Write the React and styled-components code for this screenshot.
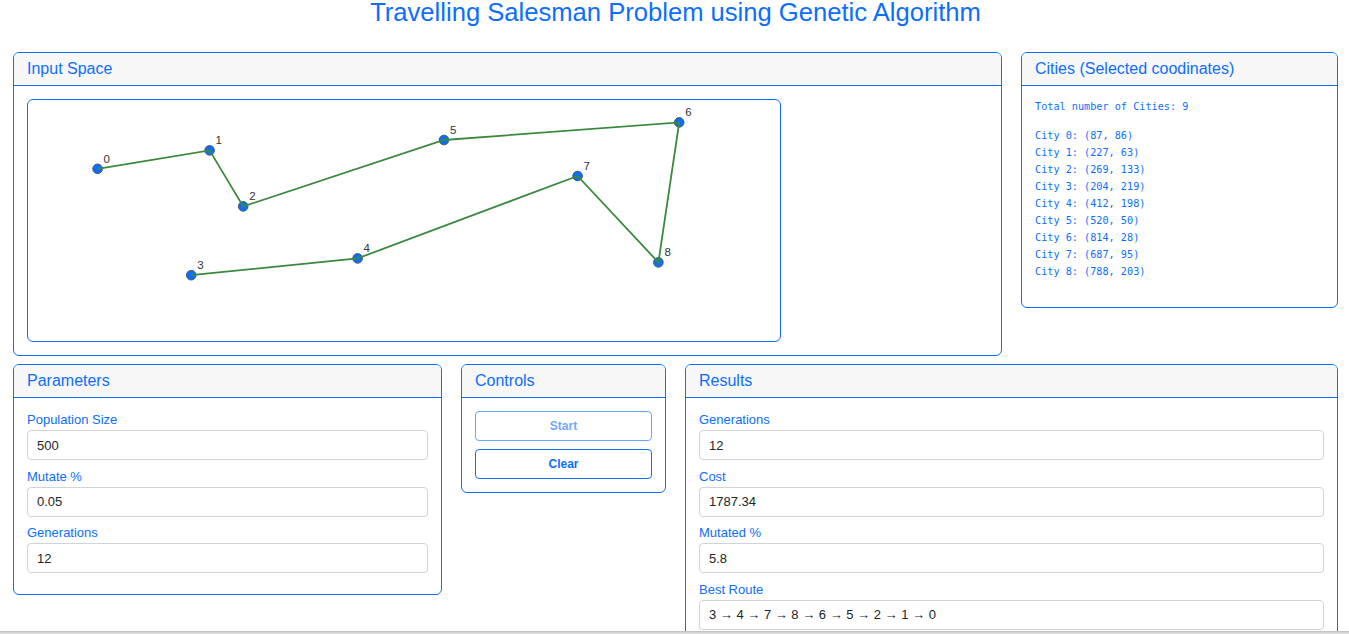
import styled, { createGlobalStyle } from 'styled-components';

const GlobalStyle = createGlobalStyle`
  * { box-sizing: border-box; }
  body {
    margin: 0;
    background: #fff;
    font-family: "Liberation Sans", Arial, sans-serif;
    color: #212529;
  }
`;

const cities = [
  [87, 86], [227, 63], [269, 133], [204, 219], [412, 198],
  [520, 50], [814, 28], [687, 95], [788, 203],
];
const route = [3, 4, 7, 8, 6, 5, 2, 1, 0];
const SCALE = 0.8;

const Page = styled.div`
  padding: 0 11px 0 13px;
`;

const Title = styled.h1`
  margin: 0 0 27px;
  text-align: center;
  font-size: 25.6px;
  line-height: 25px;
  font-weight: 400;
  color: #0d6efd;
`;

const Row = styled.div`
  display: grid;
  grid-template-columns: ${(p) => p.$cols};
  gap: 19px;
  align-items: start;
  margin-bottom: ${(p) => p.$mb || 0}px;
`;

const Card = styled.div`
  min-width: 0;
  border: 1px solid #0d6efd;
  border-radius: 6px;
  overflow: hidden;
  background: #fff;
`;

const CardHeader = styled.div`
  background: #f7f7f7;
  border-bottom: 1px solid #0d6efd;
  padding: 4px 13px;
  font-size: 16px;
  line-height: 24px;
  color: #0d6efd;
`;

const CardBody = styled.div`
  padding: 13px;
`;

const CanvasBox = styled.div`
  width: 754px;
  height: 243px;
  border: 1px solid #0d6efd;
  border-radius: 6px;
  overflow: hidden;
`;

const Mono = styled.div`
  font-family: "DejaVu Sans Mono", "Liberation Mono", monospace;
  font-size: 10.2px;
  line-height: 17px;
  color: #0d6efd;
  white-space: pre;
  margin-top: ${(p) => p.$mt || 0}px;
  margin-bottom: ${(p) => p.$mb || 0}px;
`;

const Field = styled.div`
  margin-bottom: 7.5px;
`;

const Label = styled.div`
  font-size: 13px;
  line-height: 17px;
  color: #0d6efd;
  margin-bottom: 2px;
`;

const Input = styled.div`
  height: 30px;
  border: 1px solid #ced4da;
  border-radius: 4px;
  padding: 0 9px;
  display: flex;
  align-items: center;
  font-size: 13px;
  color: #212529;
  white-space: nowrap;
`;

const ButtonStack = styled.div`
  display: flex;
  flex-direction: column;
  gap: 8px;
`;

const Button = styled.button`
  height: 30px;
  width: 100%;
  border: 1px solid #0d6efd;
  border-radius: 4px;
  background: #fff;
  color: #0d6efd;
  font-family: "Liberation Sans", Arial, sans-serif;
  font-size: 12px;
  font-weight: 700;
  opacity: ${(p) => (p.disabled ? 0.6 : 1)};
`;

const ScrollEdge = styled.div`
  position: fixed;
  left: 0;
  right: 0;
  bottom: 0;
  height: 3px;
  background: linear-gradient(#bdbdbd, #e6e6e6);
`;

function TourCanvas() {
  const pts = cities.map(([x, y]) => [x * SCALE, y * SCALE]);
  const path = route.map((i) => pts[i].join(',')).join(' ');
  return (
    <CanvasBox>
      <svg width="752" height="241">
        {pts.map(([x, y], i) => (
          <circle key={i} cx={x} cy={y} r="4.8" fill="#0d6efd" stroke="#455a64" strokeWidth="1" />
        ))}
        <polyline points={path} fill="none" stroke="#3a8a3e" strokeWidth="1.8" />
        {pts.map(([x, y], i) => (
          <text key={i} x={x + 6} y={y - 6} fontSize="11.5" fill="#333" fontFamily="Liberation Sans, Arial, sans-serif">
            {i}
          </text>
        ))}
      </svg>
    </CanvasBox>
  );
}

const params = [
  ['Population Size', '500'],
  ['Mutate %', '0.05'],
  ['Generations', '12'],
];

const results = [
  ['Generations', '12'],
  ['Cost', '1787.34'],
  ['Mutated %', '5.8'],
  ['Best Route', route.join(' \u2192 ')],
];

export default function App() {
  return (
    <>
      <GlobalStyle />
      <Page>
        <Title>Travelling Salesman Problem using Genetic Algorithm</Title>

        <Row $cols="minmax(0, 989fr) minmax(0, 317fr)" $mb={8}>
          <Card>
            <CardHeader>Input Space</CardHeader>
            <CardBody>
              <TourCanvas />
            </CardBody>
          </Card>
          <Card>
            <CardHeader>Cities (Selected coodinates)</CardHeader>
            <CardBody>
              <Mono $mt={-1} $mb={12}>Total number of Cities: {cities.length}</Mono>
              <Mono $mb={14}>
                {cities.map(([x, y], i) => `City ${i}: (${x}, ${y})`).join('\n')}
              </Mono>
            </CardBody>
          </Card>
        </Row>

        <Row $cols="minmax(0, 429fr) minmax(0, 205fr) minmax(0, 653fr)">
          <Card>
            <CardHeader>Parameters</CardHeader>
            <CardBody>
              {params.map(([label, value]) => (
                <Field key={label}>
                  <Label>{label}</Label>
                  <Input>{value}</Input>
                </Field>
              ))}
            </CardBody>
          </Card>
          <Card>
            <CardHeader>Controls</CardHeader>
            <CardBody>
              <ButtonStack>
                <Button disabled>Start</Button>
                <Button>Clear</Button>
              </ButtonStack>
            </CardBody>
          </Card>
          <Card>
            <CardHeader>Results</CardHeader>
            <CardBody>
              {results.map(([label, value]) => (
                <Field key={label}>
                  <Label>{label}</Label>
                  <Input>{value}</Input>
                </Field>
              ))}
            </CardBody>
          </Card>
        </Row>
      </Page>
      <ScrollEdge />
    </>
  );
}
